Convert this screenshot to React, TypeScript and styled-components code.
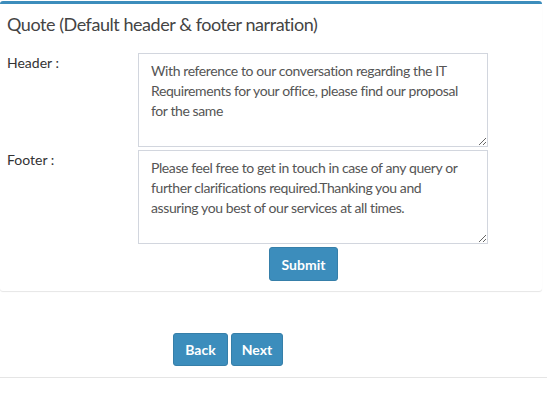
import styled, { createGlobalStyle } from 'styled-components';

const GlobalStyle = createGlobalStyle`
  body {
    margin: 0;
    background: #fff;
    font-family: Lato, "Liberation Sans", sans-serif;
    color: #333;
  }
`;

const headerText =
  'With reference to our conversation regarding the IT Requirements for your office, please find our proposal for the same';
const footerText =
  'Please feel free to get in touch in case of any query or further clarifications required.Thanking you and assuring you best of our services at all times.';

function App() {
  return (
    <Page>
      <GlobalStyle />
      <Box>
        <BoxHeader>
          <Title>Quote (Default header &amp; footer narration)</Title>
        </BoxHeader>
        <BoxBody>
          <Row>
            <Label>Header :</Label>
            <Field defaultValue={headerText} />
          </Row>
          <Row>
            <Label>Footer :</Label>
            <Field defaultValue={footerText} />
          </Row>
          <SubmitRow>
            <Button $width={69} $height={34}>Submit</Button>
          </SubmitRow>
        </BoxBody>
      </Box>
      <Nav>
        <Button $width={55} $height={33}>Back</Button>
        <Button $width={52} $height={33}>Next</Button>
      </Nav>
      <Rule />
    </Page>
  );
}

const Page = styled.div`
  width: 547px;
  padding-top: 1px;
`;

const Box = styled.div`
  width: 542px;
  background: #fff;
  border-top: 3px solid #3c8dbc;
  border-radius: 3px;
  box-shadow: 0 1px 1px rgba(0, 0, 0, 0.1);
`;

const BoxHeader = styled.div`
  padding: 10px 7px 9px;
`;

const Title = styled.h3`
  margin: 0;
  font-size: 18px;
  line-height: 20px;
  font-weight: 400;
  letter-spacing: -0.45px;
  color: #444;
`;

const BoxBody = styled.div`
  padding: 10px 0 10px;
  display: flex;
  flex-direction: column;
  gap: 3px;
`;

const Row = styled.div`
  display: flex;
`;

const Label = styled.label`
  width: 131px;
  padding: 2px 0 0 7px;
  font-size: 14px;
  line-height: 16px;
  color: #333;
`;

const Field = styled.textarea`
  box-sizing: border-box;
  width: 350px;
  height: 94px;
  margin: 0;
  padding: 7px 22px 7px 12px;
  border: 1px solid #d2d6de;
  border-radius: 0;
  font-family: inherit;
  font-size: 14px;
  line-height: 20px;
  letter-spacing: -0.4px;
  color: #555;
  resize: vertical;
  outline: none;
`;

const SubmitRow = styled.div`
  padding-left: 269px;
`;

const Button = styled.button<{ $width: number; $height: number }>`
  box-sizing: border-box;
  width: ${(p) => p.$width}px;
  height: ${(p) => p.$height}px;
  padding: 0;
  border: 1px solid #367fa9;
  border-radius: 3px;
  background: #3c8dbc;
  color: #fff;
  font-family: inherit;
  font-size: 14px;
  font-weight: 700;
`;

const Nav = styled.div`
  display: flex;
  gap: 3px;
  padding: 42px 0 0 173px;
`;

const Rule = styled.hr`
  margin: 11px 0 0;
  border: 0;
  border-top: 1px solid #e5e5e5;
`;

export default App;
